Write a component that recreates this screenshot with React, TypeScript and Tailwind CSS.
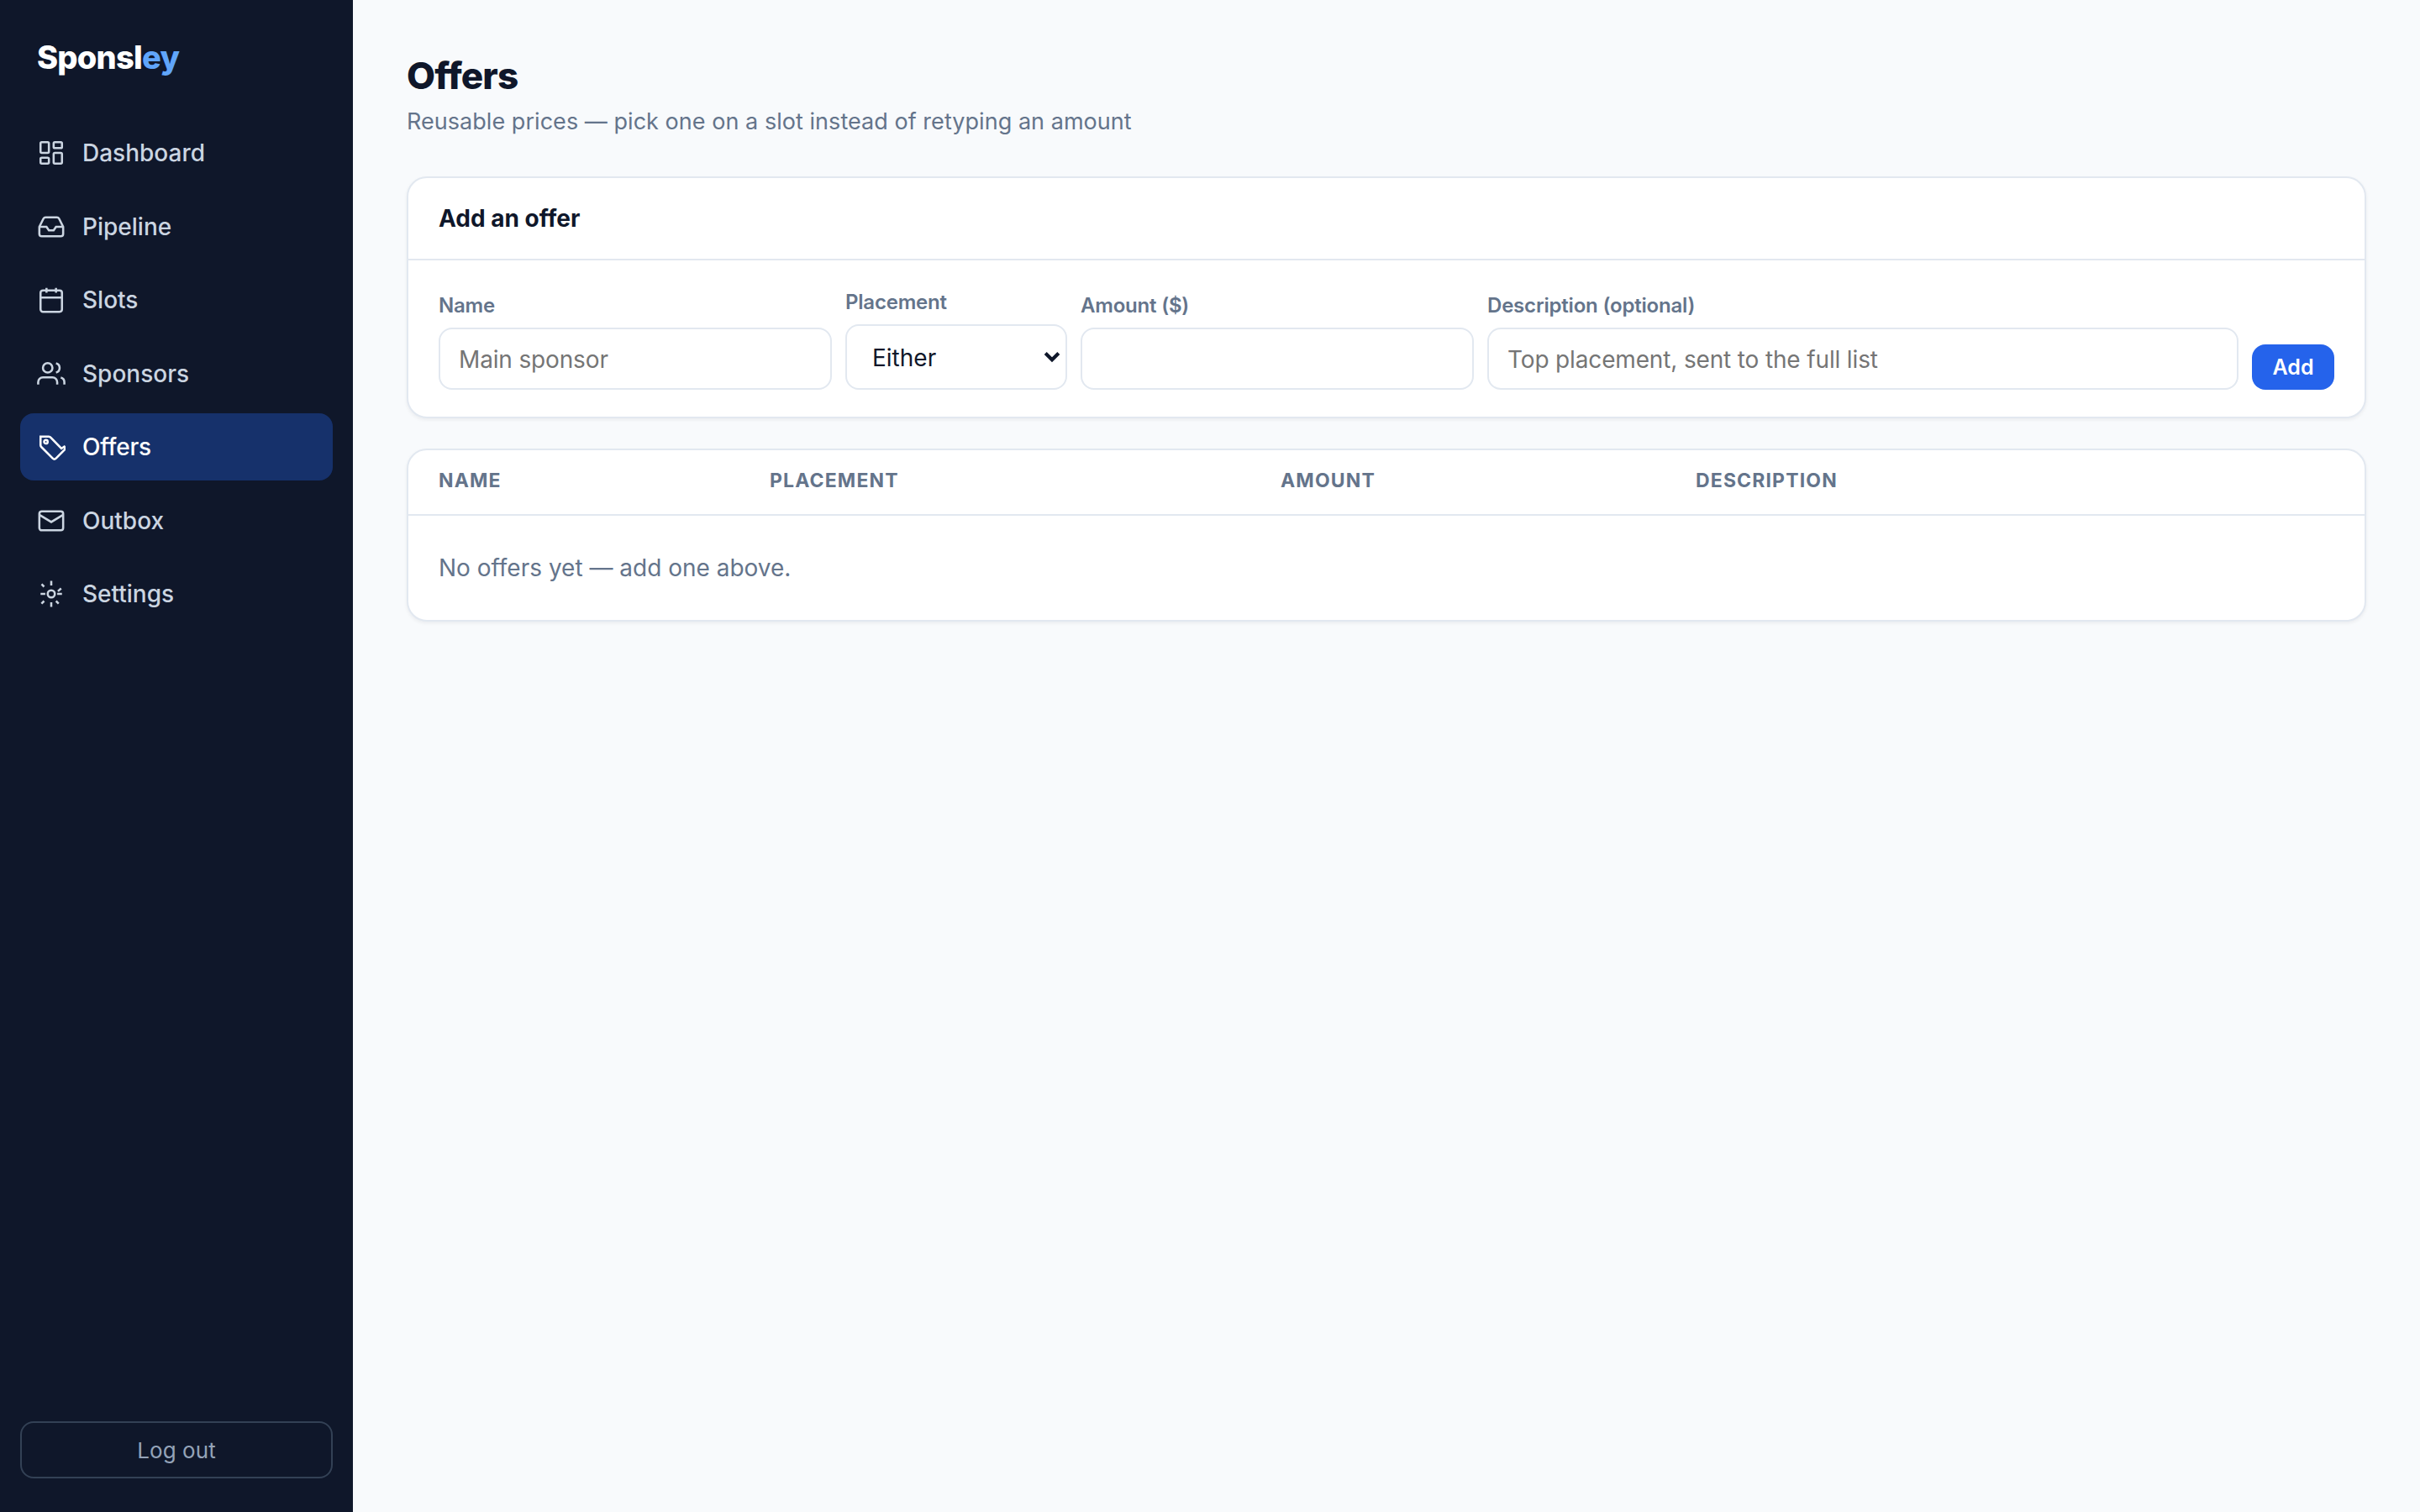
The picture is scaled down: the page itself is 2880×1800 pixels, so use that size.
import React from 'react';

const icons = {
  dashboard: (
    <>
      <rect x="3" y="3" width="7" height="9" rx="1" />
      <rect x="14" y="3" width="7" height="5" rx="1" />
      <rect x="14" y="12" width="7" height="9" rx="1" />
      <rect x="3" y="16" width="7" height="5" rx="1" />
    </>
  ),
  pipeline: (
    <>
      <path d="M22 12h-6l-2 3h-4l-2-3H2" />
      <path d="M5.45 5.11 2 12v6a2 2 0 0 0 2 2h16a2 2 0 0 0 2-2v-6l-3.45-6.89A2 2 0 0 0 16.76 4H7.24a2 2 0 0 0-1.79 1.11z" />
    </>
  ),
  slots: (
    <>
      <rect x="3" y="4" width="18" height="18" rx="2" />
      <path d="M16 2v4M8 2v4M3 10h18" />
    </>
  ),
  sponsors: (
    <>
      <path d="M17 21v-2a4 4 0 0 0-4-4H5a4 4 0 0 0-4 4v2" />
      <circle cx="9" cy="7" r="4" />
      <path d="M23 21v-2a4 4 0 0 0-3-3.87M16 3.13a4 4 0 0 1 0 7.75" />
    </>
  ),
  offers: (
    <>
      <path d="M20.5 13.4 11.4 4A2 2 0 0 0 10 3.3H3v7.3a2 2 0 0 0 .6 1.4l9.6 9.6a2 2 0 0 0 2.8 0l7-7a2 2 0 0 0 0-2.8z" />
      <circle cx="7.5" cy="7.7" r="1.5" />
    </>
  ),
  outbox: (
    <>
      <rect x="2" y="4" width="20" height="16" rx="2" />
      <path d="m2 7 10 6 10-6" />
    </>
  ),
  settings: (
    <>
      <circle cx="12" cy="12" r="3" />
      <path d="M12 1v4M12 19v4M3.9 3.8l2.1 2.2M16 18l2.2 2.2M3 12h4M17 12h4M3.8 20.2 6 18M17.6 9.8l2.7-2.4" />
    </>
  ),
};

const nav: { label: string; icon: keyof typeof icons; active?: boolean }[] = [
  { label: 'Dashboard', icon: 'dashboard' },
  { label: 'Pipeline', icon: 'pipeline' },
  { label: 'Slots', icon: 'slots' },
  { label: 'Sponsors', icon: 'sponsors' },
  { label: 'Offers', icon: 'offers', active: true },
  { label: 'Outbox', icon: 'outbox' },
  { label: 'Settings', icon: 'settings' },
];

const Sidebar = () => (
  <aside className="w-[420px] shrink-0 bg-[#0f172a] px-6 pt-[38px] pb-10 flex flex-col">
    <div className="px-5 mb-[44.4px] text-[38px] leading-[60px] font-extrabold tracking-[-0.02em] text-white">
      Sponsl<span className="text-[#60a5fa]">ey</span>
    </div>
    <nav className="flex flex-col gap-2">
      {nav.map((item) => (
        <a
          key={item.label}
          className={
            item.active
              ? 'flex items-center gap-5 px-5 h-[79.5px] rounded-2xl bg-[#16316b] text-white font-medium tracking-[-0.2px]'
              : 'flex items-center gap-5 px-5 h-[79.5px] rounded-2xl text-[#cbd5e1] font-medium'
          }
        >
          <svg className="w-[34px] h-[34px]" viewBox="0 0 24 24" fill="none" stroke="currentColor" strokeWidth="1.8">
            {icons[item.icon]}
          </svg>
          {item.label}
        </a>
      ))}
    </nav>
    <button className="mt-auto h-[68px] rounded-2xl border-2 border-[#334155] text-[26px] tracking-[0.1px] text-[#94a3b8]">
      Log out
    </button>
  </aside>
);

const Field = ({ label, className, children }: { label: string; className: string; children: React.ReactNode }) => (
  <label className={`flex flex-col ${className}`}>
    <span className="text-[24px] leading-[36px] mb-2 font-semibold tracking-[-0.2px] text-[#64748b]">{label}</span>
    {children}
  </label>
);

const inputClass =
  'w-full h-[74px] px-[22px] pt-0.5 rounded-2xl border-2 border-[#e2e8f0] bg-white text-[28px] tracking-[-0.15px] placeholder:text-[#757575]';

const AddOffer = () => (
  <section className="h-72 rounded-3xl border-2 border-[#e2e8f0] bg-white shadow-[0_2px_4px_rgba(15,23,42,0.06)]">
    <h2 className="h-[98px] px-9 flex items-center border-b-2 border-[#e2e8f0] text-[28px] font-bold">
      Add an offer
    </h2>
    <div className="h-[186px] flex items-end gap-4 px-9 pb-8">
      <Field label="Name" className="w-[468px] shrink-0">
        <input className={inputClass} placeholder="Main sponsor" />
      </Field>
      <Field label="Placement" className="w-[264px] shrink-0">
        <span className="h-[78px] pr-1.5 flex items-center rounded-2xl border-2 border-[#e2e8f0] bg-white">
          <select className="flex-1 min-w-0 h-full pl-[30px] pt-0.5 appearance-none outline-none text-[28px]">
            <option>Either</option>
          </select>
          <svg className="w-5 h-3.5" viewBox="0 0 20 14" fill="none" stroke="currentColor" strokeWidth="4.2">
            <path d="M2.2 2.5 10 10.2l7.8-7.7" />
          </svg>
        </span>
      </Field>
      <Field label="Amount ($)" className="w-[468px] shrink-0">
        <input className={inputClass} />
      </Field>
      <Field label="Description (optional)" className="flex-1">
        <input className={inputClass} placeholder="Top placement, sent to the full list" />
      </Field>
      <button className="w-[98px] h-[54px] pt-0.5 rounded-2xl bg-[#2563eb] text-white text-[25px] font-semibold">
        Add
      </button>
    </div>
  </section>
);

const OffersTable = () => (
  <section className="mt-9 rounded-3xl border-2 border-[#e2e8f0] bg-white shadow-[0_2px_4px_rgba(15,23,42,0.06)]">
    <div className="h-[78px] px-9 pb-1 grid grid-cols-[394px_608px_494px_1fr] items-center border-b-2 border-[#e2e8f0] text-[23px] font-bold uppercase tracking-[0.05em] text-[#64748b]">
      <span>Name</span>
      <span>Placement</span>
      <span>Amount</span>
      <span>Description</span>
    </div>
    <div className="h-[124px] px-9 flex items-center text-[#64748b]">No offers yet — add one above.</div>
  </section>
);

export default function App() {
  return (
    <div className="flex h-[1800px] bg-[#f8fafc] font-[Inter,sans-serif] text-[28px] text-[#0f172a] [font-variation-settings:'opsz'_14]">
      <Sidebar />
      <main className="flex-1 px-16 pt-[57px]">
        <h1 className="text-[44px] leading-[66px] font-extrabold tracking-[-0.02em]">Offers</h1>
        <p className="mt-0.5 text-[27px] leading-[40px] mb-[45px] tracking-[0.04px] text-[#64748b]">
          Reusable prices — pick one on a slot instead of retyping an amount
        </p>
        <AddOffer />
        <OffersTable />
      </main>
    </div>
  );
}
